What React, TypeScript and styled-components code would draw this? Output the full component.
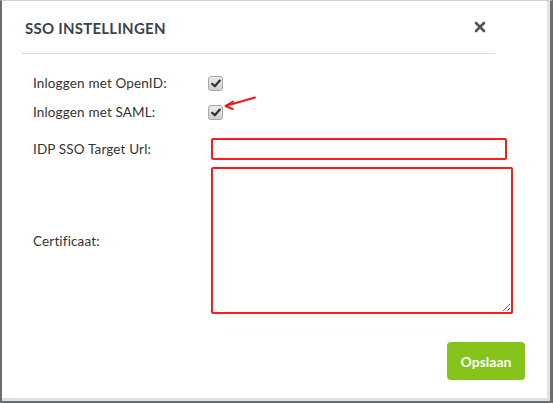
import React from "react";
import styled, { createGlobalStyle } from "styled-components";

const Global = createGlobalStyle`
  html, body { margin: 0; padding: 0; background: #fff; }
  body { font-family: Lato, "Open Sans", sans-serif; }
`;

const Window = styled.div`
  width: 554px;
  height: 403px;
  box-sizing: border-box;
  background: #fff;
`;

const Frame = styled.div`
  width: 553px;
  height: 403px;
  box-sizing: border-box;
  border-left: 2px solid #6e6e6e;
  border-right: 3px solid #6e6e6e;
  border-bottom: 2px solid #6e6e6e;
  border-top: 1px solid #cfcfcf;
  display: flex;
`;

const Dialog = styled.div`
  flex: 1;
  display: flex;
  flex-direction: column;
  border-right: 3px solid #e3e3e3;
  border-bottom: 3px solid #dbe1e6;
  background: #fff;
`;

const Header = styled.div`
  height: 53px;
  margin: 0 52px 0 20px;
  padding: 0 9px 0 3px;
  border-bottom: 1px solid #dcdcdc;
  display: flex;
  align-items: center;
  justify-content: space-between;
  box-sizing: border-box;
`;

const Title = styled.h2`
  margin: 0;
  padding-top: 2px;
  font-family: Lato, "Open Sans", sans-serif;
  font-size: 15px;
  font-weight: 700;
  letter-spacing: 0.25px;
  color: #3b4350;
`;

const Close = styled.button`
  border: 0;
  background: none;
  padding: 0;
  width: 12px;
  height: 12px;
  display: flex;
  cursor: pointer;
`;

const Form = styled.div`
  display: flex;
  flex-direction: column;
  padding: 0 0 0 31px;
`;

const Row = styled.div<{ $top: number }>`
  display: grid;
  grid-template-columns: 178px auto;
  align-items: center;
  margin-top: ${(p) => p.$top}px;
  position: relative;
`;

const Label = styled.label`
  font-size: 13.5px;
  letter-spacing: 0.15px;
  color: #333;
  font-family: Lato, "Open Sans", sans-serif;
`;

const CheckBox = styled.span`
  width: 13px;
  height: 13px;
  margin-left: -3px;
  border: 1px solid #a8a8a8;
  border-radius: 3px;
  background: linear-gradient(#ececec, #cfcfcf);
  display: flex;
  align-items: center;
  justify-content: center;
`;

const TextInput = styled.input`
  width: 296px;
  height: 22px;
  box-sizing: border-box;
  border: 2px solid #ff1a1a;
  border-radius: 2px;
  outline: none;
  padding: 2px 4px;
  font-size: 13px;
`;

const TextArea = styled.textarea`
  width: 302px;
  height: 147px;
  box-sizing: border-box;
  border: 2px solid #ff1a1a;
  border-radius: 2px;
  outline: none;
  padding: 2px 4px;
  font-size: 13px;
  resize: both;
  display: block;
`;

const Arrow = styled.svg`
  position: absolute;
  left: 191px;
  top: -7px;
  overflow: visible;
`;

const Footer = styled.div`
  display: flex;
  justify-content: flex-end;
  padding: 28px 22px 0 0;
`;

const SaveButton = styled.button`
  width: 78px;
  height: 38px;
  border: 0;
  border-radius: 4px;
  background: #86c31b;
  color: #fff;
  font-family: Lato, "Open Sans", sans-serif;
  font-weight: 700;
  font-size: 14px;
  cursor: pointer;
`;

const Check = () => (
  <svg width="10" height="9" viewBox="0 0 10 9">
    <path d="M1.2 4.8 L3.8 7.3 L8.8 1.6" fill="none" stroke="#2f2f2f" strokeWidth="2.2" strokeLinecap="round" strokeLinejoin="round" />
  </svg>
);

export default function App() {
  return (
    <Window>
      <Global />
      <Frame>
        <Dialog>
          <Header>
            <Title>SSO INSTELLINGEN</Title>
            <Close aria-label="Sluiten">
              <svg width="12" height="12" viewBox="0 0 12 12">
                <path d="M2 2 L10 10 M10 2 L2 10" stroke="#555" strokeWidth="2.6" strokeLinecap="round" />
              </svg>
            </Close>
          </Header>
          <Form>
            <Row $top={21}>
              <Label>Inloggen met OpenID:</Label>
              <CheckBox><Check /></CheckBox>
            </Row>
            <Row $top={13}>
              <Label>Inloggen met SAML:</Label>
              <CheckBox><Check /></CheckBox>
              <Arrow width="32" height="14">
                <path d="M31 0.5 L3 8.5" stroke="#f21818" strokeWidth="2" fill="none" strokeLinecap="round" />
                <path d="M9 4.5 L1.5 9 L8.5 12" stroke="#f21818" strokeWidth="2" fill="none" strokeLinecap="round" strokeLinejoin="round" />
              </Arrow>
            </Row>
            <Row $top={18}>
              <Label>IDP SSO Target Url:</Label>
              <TextInput type="text" />
            </Row>
            <Row $top={7}>
              <Label>Certificaat:</Label>
              <TextArea />
            </Row>
          </Form>
          <Footer>
            <SaveButton>Opslaan</SaveButton>
          </Footer>
        </Dialog>
      </Frame>
    </Window>
  );
}
